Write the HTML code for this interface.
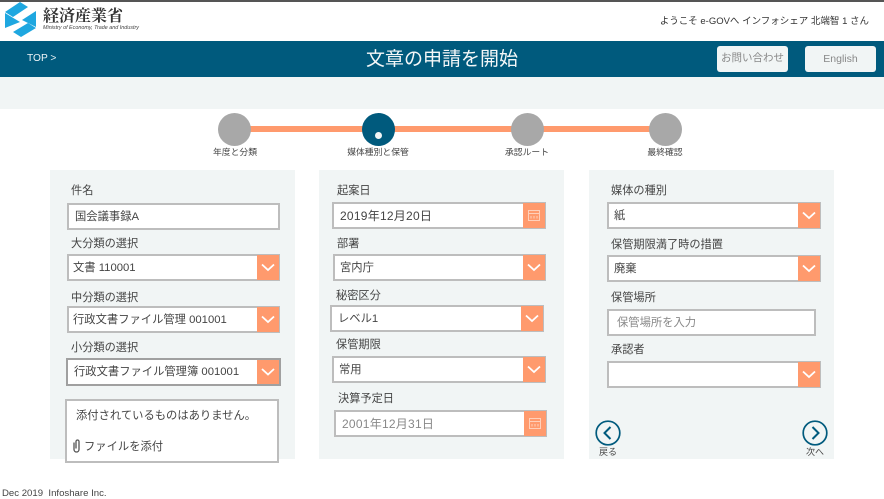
<!DOCTYPE html>
<html lang="ja">
<head>
<meta charset="utf-8">
<style>
html,body{margin:0;padding:0;background:#fff}
body{width:884px;height:499px;position:relative;overflow:hidden;font-family:"Liberation Sans","Noto Sans CJK JP",sans-serif;color:#444}
#w{position:absolute;left:0;top:0;width:884px;height:499px;background:#fff;filter:blur(.3px)}
div,span{box-sizing:border-box}
.a{position:absolute}
.t{position:absolute;white-space:nowrap;line-height:1}
.lb{font-size:11.2px;color:#444;margin-top:1px}
.f{position:absolute;height:27px;background:#fff;border:2px solid #bdbdbd;font-size:11.3px;line-height:25px;padding-left:6px;color:#444;white-space:nowrap}
.btn{position:absolute;right:-1px;top:-1px;bottom:-1px;width:22px;background:#ff9a6d}
.btn svg{position:absolute;left:0;top:1px}
.c{position:absolute;width:33px;height:33px;border-radius:50%;background:#a8a8a8;top:113px}
.s{position:absolute;font-size:8.8px;line-height:1;top:148px;white-space:nowrap;color:#444;transform:translateX(-50%)}
.p{position:absolute;top:170px;height:289px;width:245px;background:#f1f5f5}
.d{font-size:12px;letter-spacing:.25px;line-height:24px}
</style>
</head>
<body>
<div id="w">
<div class="a" style="left:0;top:0;width:884px;height:2px;background:#555"></div>
<svg class="a" style="left:4px;top:1px" width="34" height="37" viewBox="0 0 34 37">
<polygon points="1,11 16,1 24,6 9,16" fill="#1ea7e0"/>
<polygon points="1,12 16,21 1,27" fill="#1ea7e0"/>
<polygon points="32,10 32,26 18,19" fill="#1ea7e0"/>
<polygon points="9,31 24,22 32,27 17,36" fill="#1ea7e0"/>
</svg>
<div class="t" style="left:43px;top:9px;font-size:16px;font-weight:bold;color:#333;font-family:'Liberation Serif','Noto Serif CJK SC',serif">経済産業省</div>
<div class="t" style="left:43px;top:26px;font-size:5.4px;font-style:italic;color:#444">Ministry of Economy, Trade and Industry</div>
<div class="t" style="right:15px;top:17px;font-size:9.5px;color:#333">ようこそ e-GOVへ インフォシェア 北端智 1 さん</div>
<div class="a" style="left:0;top:41px;width:884px;height:36px;background:#005a7d"></div>
<div class="t" style="left:27px;top:54px;font-size:10.2px;color:#eef4f7">TOP &gt;</div>
<div class="t" style="left:366px;top:50px;font-size:19px;color:#f4f7f8">文章の申請を開始</div>
<div class="a" style="left:717px;top:46px;width:71px;height:26px;background:#f1f5f5;border-radius:3px;font-size:10.5px;line-height:25px;text-align:center;color:#888">お問い合わせ</div>
<div class="a" style="left:805px;top:46px;width:71px;height:26px;background:#f1f5f5;border-radius:3px;font-size:10.5px;line-height:26px;text-align:center;color:#888">English</div>
<div class="a" style="left:0;top:77px;width:884px;height:32px;background:#f1f5f5"></div>

<div class="a" style="left:240px;top:126px;width:420px;height:6px;background:#ff9a6d"></div>
<div class="c" style="left:218px"></div>
<div class="c" style="left:362px;background:#005a7d"></div>
<div class="a" style="left:375px;top:132px;width:7px;height:7px;border-radius:50%;background:#f1f5f5"></div>
<div class="c" style="left:511px"></div>
<div class="c" style="left:649px"></div>
<div class="s" style="left:235px">年度と分類</div>
<div class="s" style="left:378px">媒体種別と保管</div>
<div class="s" style="left:527px">承認ルート</div>
<div class="s" style="left:665px">最終確認</div>

<div class="p" style="left:50px"></div>
<div class="p" style="left:319px"></div>
<div class="p" style="left:589px"></div>

<!-- column 1 -->
<div class="t lb" style="left:71px;top:185px">件名</div>
<div class="f" style="left:67px;top:203px;width:213px">国会議事録A</div>
<div class="t lb" style="left:71px;top:238px">大分類の選択</div>
<div class="f" style="left:67px;top:254px;width:213px;padding-left:4px">文書 110001<span class="btn"><svg width="22" height="23"><path d="M5 8.5l6 5.500 6-5.500" fill="none" stroke="#fff" stroke-width="1.800"/></svg></span></div>
<div class="t lb" style="left:71px;top:292px">中分類の選択</div>
<div class="f" style="left:67px;top:306px;width:213px;padding-left:4px">行政文書ファイル管理 001001<span class="btn"><svg width="22" height="23"><path d="M5 8.5l6 5.500 6-5.500" fill="none" stroke="#fff" stroke-width="1.800"/></svg></span></div>
<div class="t lb" style="left:71px;top:342px">小分類の選択</div>
<div class="f" style="left:66px;top:358px;width:215px;height:28px;border-color:#a0a0a0;padding-left:6px">行政文書ファイル管理簿 001001<span class="btn" style="right:0;top:0;bottom:0"><svg width="22" height="24" style="top:0"><path d="M5 9l6 5.500 6-5.500" fill="none" stroke="#fff" stroke-width="1.800"/></svg></span></div>
<div class="a" style="left:65px;top:399px;width:214px;height:64px;background:#fff;border:2px solid #bdbdbd"></div>
<div class="t" style="left:76px;top:411px;font-size:11.3px;color:#444">添付されているものはありません。</div>
<svg class="a" style="left:72px;top:439px" width="9" height="14" viewBox="0 0 9 14"><path d="M2 3.500v7a2.500 2.500 0 0 0 5 0v-8a1.500 1.500 0 0 0-3 0v7" fill="none" stroke="#555" stroke-width="1.300"/></svg>
<div class="t" style="left:84px;top:442px;font-size:11.3px;color:#444">ファイルを添付</div>

<!-- column 2 -->
<div class="t lb" style="left:337px;top:185px">起案日</div>
<div class="f d" style="left:332px;top:202px;width:214px;padding-left:6px">2019年12月20日<span class="btn"><svg width="22" height="23"><path d="M5.500 6.500h11v10h-11zM5.500 9.500h11M8 12v2.500M11 12v2.500M14 12v2.500" fill="none" stroke="#ffd0ba" stroke-width="1"/></svg></span></div>
<div class="t lb" style="left:337px;top:238px">部署</div>
<div class="f" style="left:333px;top:254px;width:213px;padding-left:5px">宮内庁<span class="btn"><svg width="22" height="23"><path d="M5 8.5l6 5.500 6-5.500" fill="none" stroke="#fff" stroke-width="1.800"/></svg></span></div>
<div class="t lb" style="left:336px;top:290px">秘密区分</div>
<div class="f" style="left:330px;top:305px;width:214px;padding-left:6px">レベル1<span class="btn"><svg width="22" height="23"><path d="M5 8.5l6 5.500 6-5.500" fill="none" stroke="#fff" stroke-width="1.800"/></svg></span></div>
<div class="t lb" style="left:336px;top:339px">保管期限</div>
<div class="f" style="left:332px;top:356px;width:214px;padding-left:5px">常用<span class="btn"><svg width="22" height="23"><path d="M5 8.5l6 5.500 6-5.500" fill="none" stroke="#fff" stroke-width="1.800"/></svg></span></div>
<div class="t lb" style="left:338px;top:393px">決算予定日</div>
<div class="f d" style="left:334px;top:410px;width:213px;padding-left:6px;color:#888">2001年12月31日<span class="btn"><svg width="22" height="23"><path d="M5.500 6.500h11v10h-11zM5.500 9.500h11M8 12v2.500M11 12v2.500M14 12v2.500" fill="none" stroke="#ffd0ba" stroke-width="1"/></svg></span></div>

<!-- column 3 -->
<div class="t lb" style="left:611px;top:185px">媒体の種別</div>
<div class="f" style="left:607px;top:202px;width:214px;padding-left:5px">紙<span class="btn"><svg width="22" height="23"><path d="M5 8.5l6 5.500 6-5.500" fill="none" stroke="#fff" stroke-width="1.800"/></svg></span></div>
<div class="t lb" style="left:611px;top:239px">保管期限満了時の措置</div>
<div class="f" style="left:607px;top:255px;width:214px;padding-left:5px">廃棄<span class="btn"><svg width="22" height="23"><path d="M5 8.5l6 5.500 6-5.500" fill="none" stroke="#fff" stroke-width="1.800"/></svg></span></div>
<div class="t lb" style="left:611px;top:292px">保管場所</div>
<div class="f" style="left:607px;top:309px;width:209px;padding-left:8px;color:#888">保管場所を入力</div>
<div class="t lb" style="left:611px;top:344px">承認者</div>
<div class="f" style="left:607px;top:361px;width:214px"><span class="btn"><svg width="22" height="23"><path d="M5 8.5l6 5.500 6-5.500" fill="none" stroke="#fff" stroke-width="1.800"/></svg></span></div>

<svg class="a" style="left:595px;top:420px" width="26" height="26" viewBox="0 0 26 26"><circle cx="13" cy="13" r="11.800" fill="none" stroke="#005a7d" stroke-width="1.700"/><path d="M15.500 7l-6 6 6 6" fill="none" stroke="#005a7d" stroke-width="2"/></svg>
<div class="t" style="left:599px;top:448px;font-size:9px;color:#444">戻る</div>
<svg class="a" style="left:802px;top:420px" width="26" height="26" viewBox="0 0 26 26"><circle cx="13" cy="13" r="11.800" fill="none" stroke="#005a7d" stroke-width="1.700"/><path d="M10.500 7l6 6-6 6" fill="none" stroke="#005a7d" stroke-width="2"/></svg>
<div class="t" style="left:806px;top:448px;font-size:9px;color:#444">次へ</div>

<div class="t" style="left:2px;top:489px;font-size:9.6px;color:#444;white-space:pre">Dec 2019  Infoshare Inc.</div>
</div>
</body>
</html>
